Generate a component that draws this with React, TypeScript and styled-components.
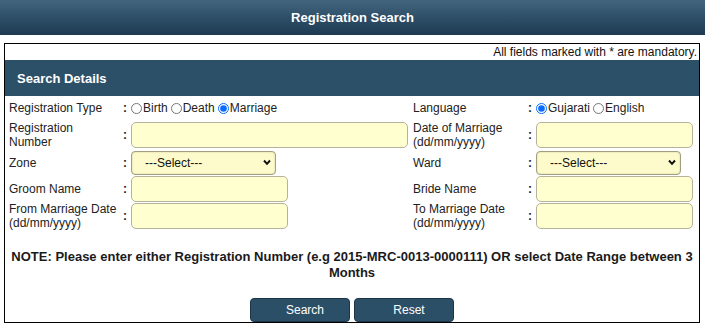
import React from "react";
import styled, { createGlobalStyle } from "styled-components";

const GlobalStyle = createGlobalStyle`
  html, body {
    margin: 0;
    padding: 0;
    background: #ffffff;
    font-family: "Liberation Sans", Arial, sans-serif;
    font-size: 12px;
    color: #1a1a1a;
  }
`;

const TitleBar = styled.div`
  height: 35px;
  display: flex;
  align-items: center;
  justify-content: center;
  background: linear-gradient(to bottom, #43667f 0%, #2c4c65 55%, #1f3b53 100%);
  color: #ffffff;
  font-size: 13px;
  font-weight: bold;
`;

const Panel = styled.div`
  margin: 8px 5px 0 4px;
  border: 1px solid #000000;
  display: flex;
  flex-direction: column;
`;

const MandatoryNote = styled.div`
  height: 16px;
  line-height: 16px;
  text-align: right;
  padding-right: 2px;
  color: #111;
`;

const SectionHeader = styled.div`
  height: 36px;
  display: flex;
  align-items: center;
  padding-left: 12px;
  background: #2d5069;
  color: #ffffff;
  font-size: 13px;
  font-weight: bold;
`;

const FormGrid = styled.div`
  display: grid;
  padding-left: 4px;
  grid-template-columns: 111px 11px 278px 116px 11px 1fr;
  grid-template-rows: 24px 30px 26px 26px 28px;
  align-items: center;
`;

const Label = styled.div<{ $right?: boolean }>`
  line-height: 14px;
  padding-left: ${({ $right }) => ($right ? "4px" : "0")};
  color: #222;
`;

const Colon = styled.div`
  padding-left: 3px;
  font-weight: bold;
`;

const Field = styled.div`
  display: flex;
  align-items: center;
`;

const RadioGroup = styled.div`
  display: flex;
  align-items: center;
`;

const RadioLabel = styled.label`
  display: flex;
  align-items: center;
  margin-right: 3px;
  color: #222;
`;

const Radio = styled.input`
  width: 11px;
  height: 11px;
  margin: 0 1px 0 0;
  accent-color: #0a6cff;
`;

const TextInput = styled.input<{ $wide?: boolean }>`
  box-sizing: border-box;
  width: ${({ $wide }) => ($wide ? "277px" : "157px")};
  height: 26px;
  border: 1px solid #b4b29a;
  border-radius: 5px;
  background: #ffffcf;
  outline: none;
`;

const SelectWrap = styled.div`
  position: relative;
  width: 145px;
  height: 24px;
`;

const Select = styled.select`
  appearance: none;
  box-sizing: border-box;
  width: 100%;
  height: 100%;
  padding: 0 0 0 13px;
  border: 1px solid #a19f7f;
  border-radius: 4px;
  background: #fdfbcb;
  box-shadow: inset 0 0 2px rgba(120, 120, 80, 0.35);
  font-family: "Liberation Sans", Arial, sans-serif;
  font-size: 12px;
  color: #111;
`;

const Chevron = styled.svg`
  position: absolute;
  right: 5px;
  top: 8px;
  pointer-events: none;
`;

const Note = styled.p`
  margin: 19px 2px 0;
  line-height: 16px;
  text-align: center;
  font-size: 13px;
  font-weight: bold;
  color: #1a1a1a;
`;

const ButtonRow = styled.div`
  display: flex;
  justify-content: center;
  gap: 4px;
  margin-top: 17px;
`;

const Button = styled.button`
  width: 100px;
  height: 24px;
  padding: 0 0 0 10px;
  border: 1px solid #1c3548;
  border-radius: 4px;
  background: #2c4f68;
  color: #ffffff;
  font-family: "Liberation Sans", Arial, sans-serif;
  font-size: 12px;
  cursor: pointer;
`;

const Dropdown = () => (
  <SelectWrap>
    <Select defaultValue="">
      <option value="">---Select---</option>
    </Select>
    <Chevron width="8" height="7" viewBox="0 0 8 7">
      <path d="M1 1.5 L4 4.8 L7 1.5" fill="none" stroke="#111" strokeWidth="2" />
    </Chevron>
  </SelectWrap>
);

export default function App() {
  return (
    <>
      <GlobalStyle />
      <TitleBar>Registration Search</TitleBar>
      <Panel>
        <MandatoryNote>All fields marked with * are mandatory.</MandatoryNote>
        <SectionHeader>Search Details</SectionHeader>
        <FormGrid>
          <Label>Registration Type</Label>
          <Colon>:</Colon>
          <RadioGroup>
            <RadioLabel>
              <Radio type="radio" name="regType" />
              Birth
            </RadioLabel>
            <RadioLabel>
              <Radio type="radio" name="regType" />
              Death
            </RadioLabel>
            <RadioLabel>
              <Radio type="radio" name="regType" defaultChecked />
              Marriage
            </RadioLabel>
          </RadioGroup>
          <Label $right>Language</Label>
          <Colon>:</Colon>
          <RadioGroup>
            <RadioLabel>
              <Radio type="radio" name="lang" defaultChecked />
              Gujarati
            </RadioLabel>
            <RadioLabel>
              <Radio type="radio" name="lang" />
              English
            </RadioLabel>
          </RadioGroup>

          <Label>
            Registration
            <br />
            Number
          </Label>
          <Colon>:</Colon>
          <Field>
            <TextInput $wide />
          </Field>
          <Label $right>
            Date of Marriage
            <br />
            (dd/mm/yyyy)
          </Label>
          <Colon>:</Colon>
          <Field>
            <TextInput />
          </Field>

          <Label>Zone</Label>
          <Colon>:</Colon>
          <Field>
            <Dropdown />
          </Field>
          <Label $right>Ward</Label>
          <Colon>:</Colon>
          <Field>
            <Dropdown />
          </Field>

          <Label>Groom Name</Label>
          <Colon>:</Colon>
          <Field>
            <TextInput />
          </Field>
          <Label $right>Bride Name</Label>
          <Colon>:</Colon>
          <Field>
            <TextInput />
          </Field>

          <Label>
            From Marriage Date
            <br />
            (dd/mm/yyyy)
          </Label>
          <Colon>:</Colon>
          <Field>
            <TextInput />
          </Field>
          <Label $right>
            To Marriage Date
            <br />
            (dd/mm/yyyy)
          </Label>
          <Colon>:</Colon>
          <Field>
            <TextInput />
          </Field>
        </FormGrid>
        <Note>
          NOTE: Please enter either Registration Number (e.g 2015-MRC-0013-0000111) OR select Date
          Range between 3 Months
        </Note>
        <ButtonRow>
          <Button type="button">Search</Button>
          <Button type="button">Reset</Button>
        </ButtonRow>
      </Panel>
    </>
  );
}
